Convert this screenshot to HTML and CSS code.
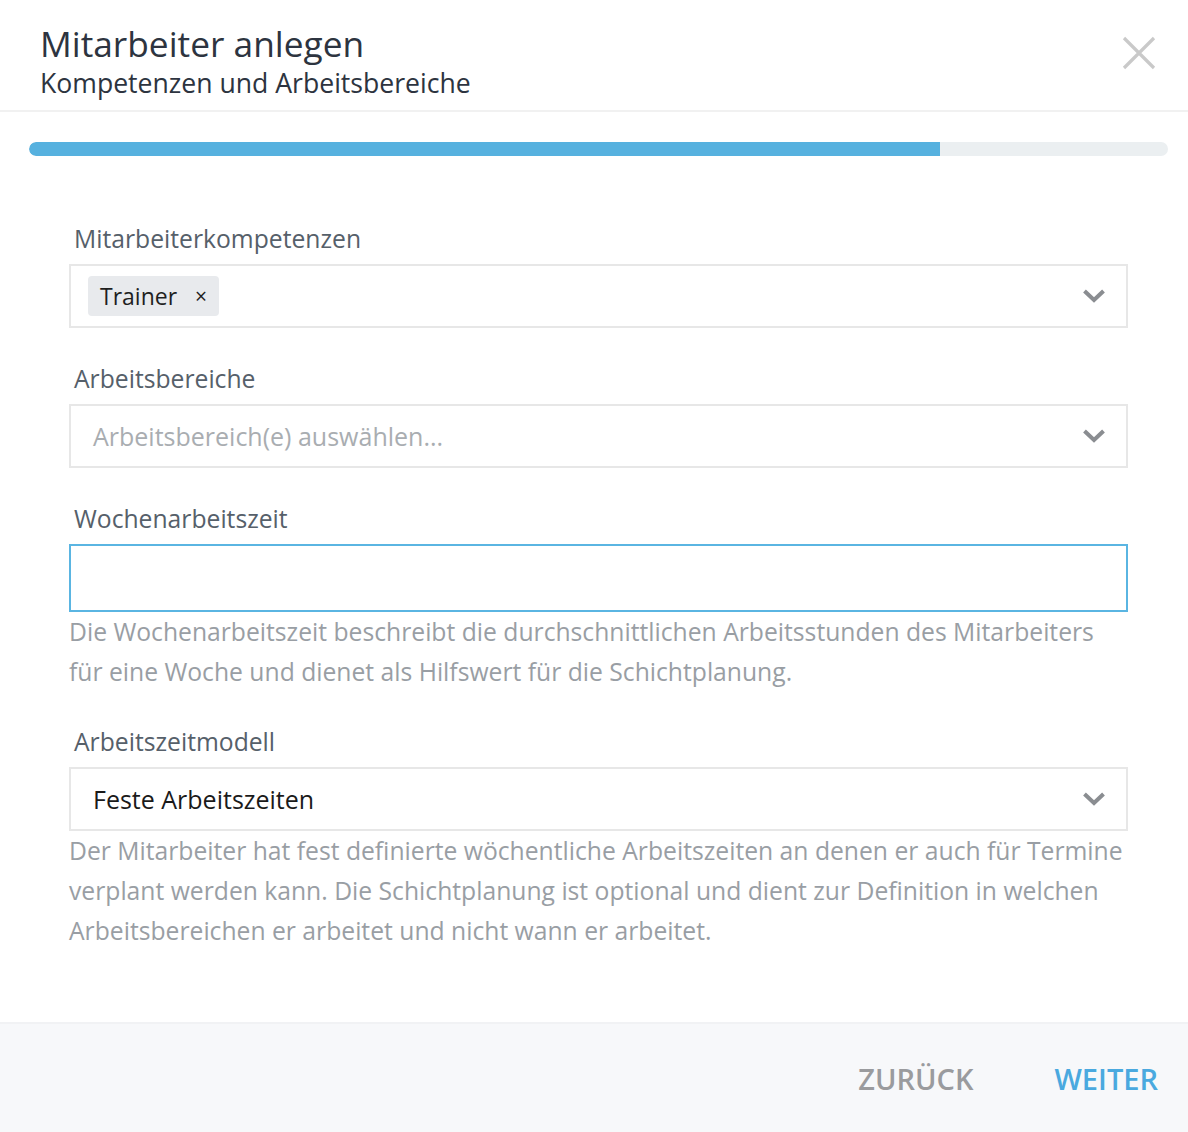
FILE: index.html
```html
<!DOCTYPE html>
<html lang="de">
<head>
  <meta charset="UTF-8">
  <meta name="viewport" content="width=device-width, initial-scale=1.0">
  <title>Mitarbeiter anlegen</title>
  <link rel="stylesheet" href="styles.css">
</head>
<body>
  <div class="modal">
    <div class="modal-header">
      <div>
        <h1>Mitarbeiter anlegen</h1>
        <p class="subtitle">Kompetenzen und Arbeitsbereiche</p>
      </div>
      <button class="close" aria-label="Schließen">
        <svg width="34" height="34" viewBox="0 0 34 34">
          <path d="M2 2 L32 32 M32 2 L2 32" stroke="#c9c9c9" stroke-width="3.2" fill="none"/>
        </svg>
      </button>
    </div>

    <div class="progress">
      <div class="progress-fill" style="width: 80%"></div>
    </div>

    <div class="form">
      <div class="field">
        <label>Mitarbeiterkompetenzen</label>
        <div class="select">
          <span class="tag">Trainer <span class="tag-remove">×</span></span>
          <svg class="chevron" width="22" height="14" viewBox="0 0 22 14">
            <path d="M1.5 2 L11 11 L20.5 2" stroke="#8a8d91" stroke-width="4" fill="none"/>
          </svg>
        </div>
      </div>

      <div class="field">
        <label>Arbeitsbereiche</label>
        <div class="select">
          <span class="placeholder">Arbeitsbereich(e) auswählen...</span>
          <svg class="chevron" width="22" height="14" viewBox="0 0 22 14">
            <path d="M1.5 2 L11 11 L20.5 2" stroke="#8a8d91" stroke-width="4" fill="none"/>
          </svg>
        </div>
      </div>

      <div class="field">
        <label>Wochenarbeitszeit</label>
        <input type="text" class="input">
        <p class="help">Die Wochenarbeitszeit beschreibt die durchschnittlichen Arbeitsstunden des Mitarbeiters für eine Woche und dienet als Hilfswert für die Schichtplanung.</p>
      </div>

      <div class="field">
        <label>Arbeitszeitmodell</label>
        <div class="select">
          <span class="value">Feste Arbeitszeiten</span>
          <svg class="chevron" width="22" height="14" viewBox="0 0 22 14">
            <path d="M1.5 2 L11 11 L20.5 2" stroke="#8a8d91" stroke-width="4" fill="none"/>
          </svg>
        </div>
        <p class="help">Der Mitarbeiter hat fest definierte wöchentliche Arbeitszeiten an denen er auch für Termine verplant werden kann. Die Schichtplanung ist optional und dient zur Definition in welchen Arbeitsbereichen er arbeitet und nicht wann er arbeitet.</p>
      </div>
    </div>

    <div class="modal-footer">
      <button class="btn btn-back">ZURÜCK</button>
      <button class="btn btn-next">WEITER</button>
    </div>
  </div>
</body>
</html>
```

FILE: styles.css
```css
* {
  margin: 0;
  padding: 0;
  box-sizing: border-box;
}

body {
  font-family: "Open Sans", Lato, sans-serif;
  background: white;
  color: #2d3440;
}

.modal {
  width: 1188px;
  height: 1132px;
  display: flex;
  flex-direction: column;
  background: white;
}

.modal-header {
  display: flex;
  justify-content: space-between;
  align-items: flex-start;
  padding: 21px 32px 9px 40px;
  border-bottom: 2px solid #f1f1f1;
}

h1 {
  font-size: 35.3px;
  font-weight: 400;
  line-height: 44px;
  color: #2d3440;
}

.subtitle {
  font-size: 26.6px;
  line-height: 36px;
  color: #2d3440;
}

.close {
  background: none;
  border: none;
  margin-top: 15px;
  cursor: pointer;
}

/* Fortschritt */
.progress {
  margin: 30px 20px 0 29px;
  height: 14px;
  border-radius: 7px;
  background: #ebeff1;
  overflow: hidden;
}

.progress-fill {
  height: 100%;
  background: #56b1df;
  border-radius: 7px 0 0 7px;
}

.form {
  flex: 1;
  padding: 68px 60px 0 69px;
}

.field {
  margin-bottom: 36px;
}

.field label {
  display: block;
  padding-left: 5px;
  font-size: 24.7px;
  line-height: 30px;
  color: #56606a;
  margin-bottom: 10px;
}

.select {
  display: flex;
  align-items: center;
  height: 64px;
  border: 2px solid #e7e7e7;
  padding: 0 21px 0 17px;
  font-size: 25px;
}

.chevron {
  margin-left: auto;
}

.tag {
  display: inline-flex;
  align-items: center;
  height: 40px;
  padding: 0 12px 0 12px;
  background: #e8eaed;
  border-radius: 4px;
  color: #1f1f1f;
  font-size: 23px;
}

.tag-remove {
  margin-left: 18px;
  font-size: 21px;
}

.placeholder {
  color: #a9adb1;
  padding-left: 5px;
}

.value {
  color: #1a1a1a;
  padding-left: 5px;
}

.input {
  display: block;
  width: 100%;
  height: 68px;
  border: 2px solid #5ab5e2;
  outline: none;
  font-size: 24px;
  padding: 0 20px;
}

.help {
  font-size: 24.7px;
  line-height: 40px;
  color: #999ea4;
}

.field:has(.help) {
  margin-bottom: 35px;
}

.modal-footer {
  display: flex;
  justify-content: flex-end;
  align-items: center;
  gap: 81px;
  height: 110px;
  padding: 0 30px 0 0;
  background: #f7f8fa;
  border-top: 2px solid #f1f2f4;
}

.btn {
  background: none;
  border: none;
  font-family: inherit;
  font-size: 29px;
  font-weight: 600;
  cursor: pointer;
}

.btn-back {
  color: #9a9b9e;
}

.btn-next {
  color: #4aa9df;
}
```
